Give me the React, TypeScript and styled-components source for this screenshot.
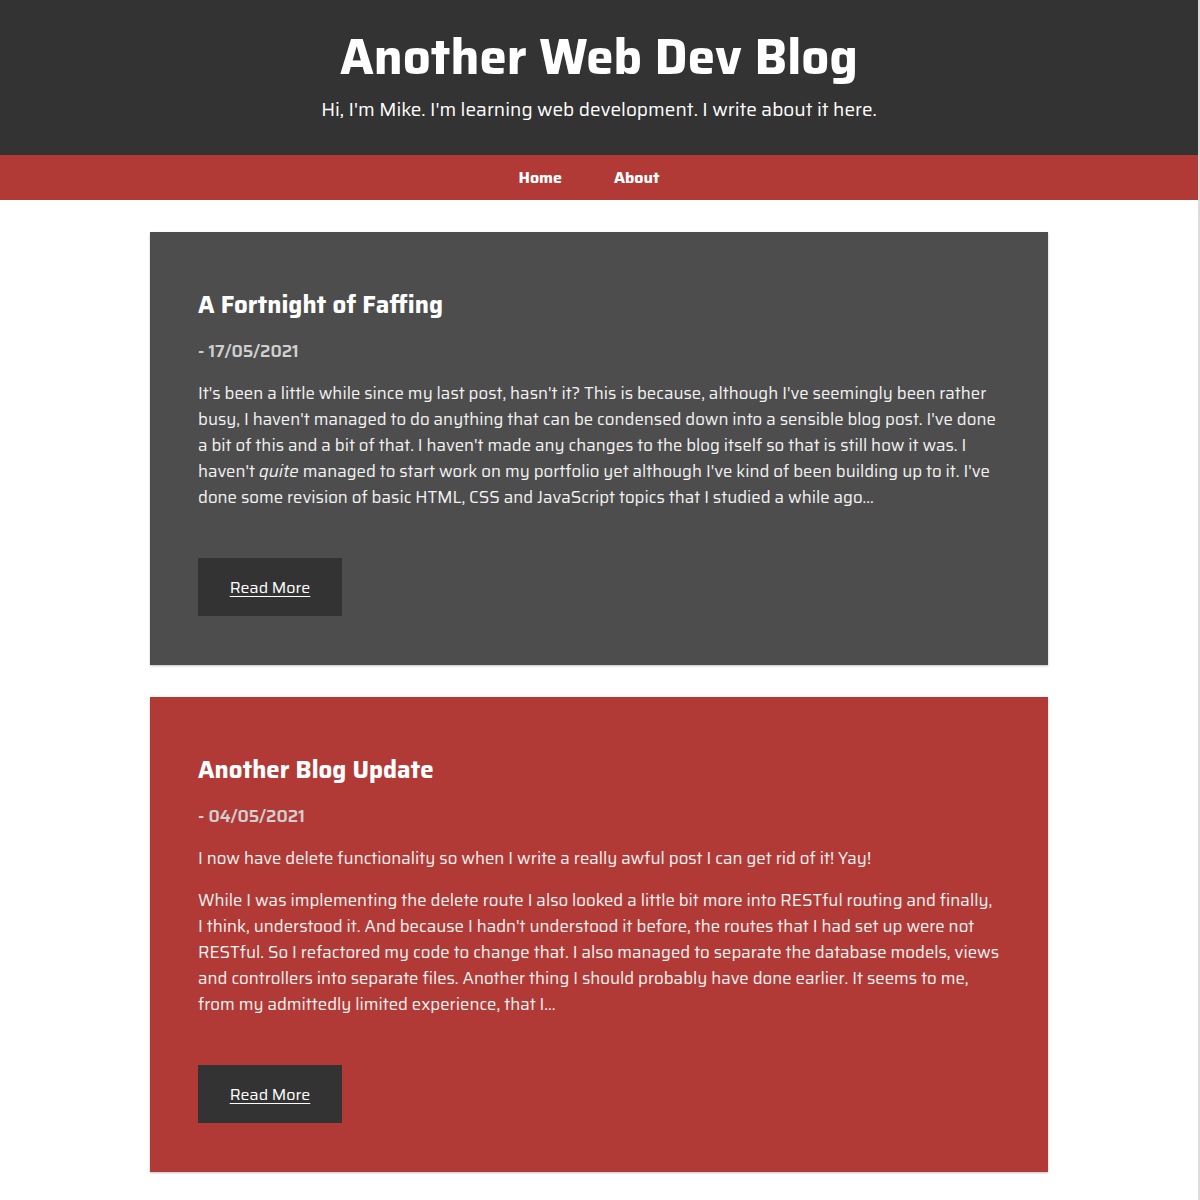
import React from "react";
import styled, { createGlobalStyle } from "styled-components";

const GlobalStyle = createGlobalStyle`
  html, body { margin: 0; padding: 0; background: #ffffff; }
  body { font-family: Saira, Roboto, "Liberation Sans", Arial, sans-serif; }
  * { box-sizing: border-box; }
`;

const Page = styled.div`
  width: 1200px;
  min-height: 1200px;
  background: #ffffff;
  border-right: 2px solid #dcdcdc;
  border-bottom: 2px solid #dcdcdc;
`;

const Header = styled.header`
  background: #333333;
  height: 155px;
  padding-top: 27px;
  text-align: center;
  color: #ffffff;
`;

const Title = styled.h1`
  margin: 0;
  font-size: 49px;
  line-height: 60px;
  font-weight: 700;
`;

const Tagline = styled.p`
  margin: 10px 0 0;
  font-size: 19px;
  line-height: 24px;
`;

const Nav = styled.nav`
  background: #b13a36;
  height: 45px;
  display: flex;
  justify-content: center;
  align-items: center;
  gap: 52px;
  padding-right: 20px;
`;

const NavLink = styled.a`
  color: #ffffff;
  font-weight: 700;
  font-size: 16px;
  text-decoration: none;
  cursor: pointer;
`;

const Main = styled.main`
  display: flex;
  flex-direction: column;
  align-items: center;
  gap: 32px;
  padding: 32px 0 28px;
`;

const Card = styled.article<{ $tone: "dark" | "red" }>`
  width: 898px;
  padding: 48px 48px 49px;
  background: ${(p) => (p.$tone === "dark" ? "#4d4d4d" : "#b13a36")};
  box-shadow: 0 1px 2px rgba(0, 0, 0, 0.25);
  color: #f2f2f2;
`;

const PostTitle = styled.h2`
  margin: 10px 0 0;
  font-size: 24px;
  line-height: 30px;
  font-weight: 700;
  color: #ffffff;
`;

const PostDate = styled.p`
  margin: 20px 0 0;
  font-size: 17px;
  line-height: 22px;
  font-weight: 600;
  color: #cfcfcf;
`;

const Para = styled.p`
  margin: 18px 0 0;
  font-size: 16.75px;
  line-height: 26px;
  & + & { margin-top: 16px; }
`;

const ReadMore = styled.a`
  display: inline-flex;
  align-items: center;
  justify-content: center;
  margin-top: 48px;
  width: 144px;
  height: 58px;
  background: #333333;
  color: #ffffff;
  font-size: 16px;
  text-decoration: underline;
  text-underline-offset: 3px;
  cursor: pointer;
`;

const posts = [
  {
    tone: "dark" as const,
    title: "A Fortnight of Faffing",
    date: "- 17/05/2021",
    body: [
      <>
        It's been a little while since my last post, hasn't it? This is because, although I've seemingly been rather
        busy, I haven't managed to do anything that can be condensed down into a sensible blog post. I've done a bit
        of this and a bit of that. I haven't made any changes to the blog itself so that is still how it was. I
        haven't <em>quite</em> managed to start work on my portfolio yet although I've kind of been building up to
        it. I've done some revision of basic HTML, CSS and JavaScript topics that I studied a while ago...
      </>,
    ],
  },
  {
    tone: "red" as const,
    title: "Another Blog Update",
    date: "- 04/05/2021",
    body: [
      <>I now have delete functionality so when I write a really awful post I can get rid of it! Yay!</>,
      <>
        While I was implementing the delete route I also looked a little bit more into RESTful routing and finally,
        I think, understood it. And because I hadn't understood it before, the routes that I had set up were not
        RESTful. So I refactored my code to change that. I also managed to separate the database models, views and
        controllers into separate files. Another thing I should probably have done earlier. It seems to me, from my
        admittedly limited experience, that I...
      </>,
    ],
  },
];

export default function App() {
  return (
    <>
      <GlobalStyle />
      <Page>
        <Header>
          <Title>Another Web Dev Blog</Title>
          <Tagline>Hi, I'm Mike. I'm learning web development. I write about it here.</Tagline>
        </Header>
        <Nav>
          <NavLink>Home</NavLink>
          <NavLink>About</NavLink>
        </Nav>
        <Main>
          {posts.map((post) => (
            <Card key={post.title} $tone={post.tone}>
              <PostTitle>{post.title}</PostTitle>
              <PostDate>{post.date}</PostDate>
              {post.body.map((b, i) => (
                <Para key={i}>{b}</Para>
              ))}
              <ReadMore>Read More</ReadMore>
            </Card>
          ))}
        </Main>
      </Page>
    </>
  );
}
